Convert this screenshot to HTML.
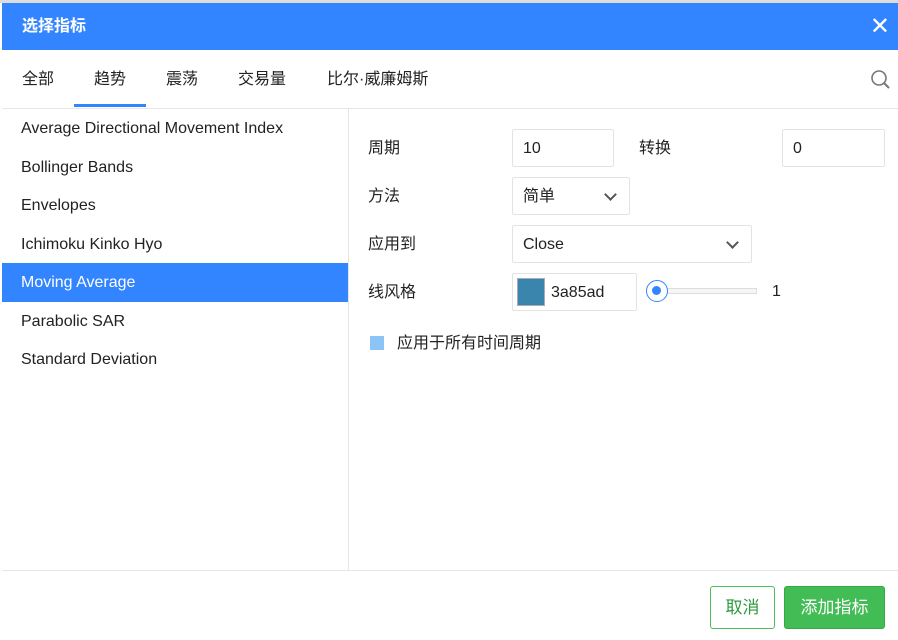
<!DOCTYPE html>
<html><head><meta charset="utf-8"><style>
*{margin:0;padding:0;box-sizing:border-box}
body{width:898px;height:640px;overflow:hidden;background:#fff;font-family:"Liberation Sans","Noto Sans CJK SC",sans-serif;color:#222;position:relative}
.top{position:absolute;left:0;top:0;width:898px;height:3px;background:#ddd}
.hdr{position:absolute;left:2px;top:3px;width:896px;height:47px;background:#3384ff;color:#fff;font-size:16px;line-height:47px;padding-left:20px;font-weight:bold}
.x{position:absolute;right:8px;top:0;font-size:24px;font-weight:normal}
.tabs{position:absolute;left:2px;top:50px;width:896px;height:59px;border-bottom:1px solid #e6e6e6}
.tab{position:absolute;top:20px;font-size:16px;line-height:20px}
.ul{position:absolute;left:72px;top:54px;width:72px;height:3px;background:#3384ff}
.left{position:absolute;left:2px;top:109px;width:347px;height:461px;border-right:1px solid #e6e6e6}
.it{height:38.5px;line-height:40px;padding-left:19px;font-size:16px}
.sel{background:#3384ff;color:#fff}
.lbl{position:absolute;font-size:16px;line-height:20px}
.box{position:absolute;border:1px solid #e3e3e3;border-radius:2px;font-size:16px;line-height:20px;padding:9px 0 0 10px}
.chev{position:absolute;right:14px;top:12px;width:9px;height:9px;border-right:2px solid #555;border-bottom:2px solid #555;transform:rotate(45deg)}
.foot{position:absolute;left:2px;top:570px;width:896px;border-top:1px solid #e6e6e6}
.btn{position:absolute;top:586px;height:43px;border-radius:3px;font-size:17px;line-height:41px;text-align:center}
</style></head><body>
<div class="top"></div>
<div class="hdr">选择指标<span class="x">✕</span></div>
<div class="tabs">
<span class="tab" style="left:20px">全部</span>
<span class="tab" style="left:92px">趋势</span>
<span class="tab" style="left:164px">震荡</span>
<span class="tab" style="left:236px">交易量</span>
<span class="tab" style="left:325px">比尔·威廉姆斯</span>
<div class="ul"></div>
<svg style="position:absolute;left:868px;top:19px" width="22" height="22" viewBox="0 0 22 22"><circle cx="9" cy="9" r="7" fill="none" stroke="#777" stroke-width="1.6"/><path d="M14 14 L19 19" stroke="#777" stroke-width="2"/></svg>
</div>
<div class="left">
<div class="it">Average Directional Movement Index</div>
<div class="it">Bollinger Bands</div>
<div class="it">Envelopes</div>
<div class="it">Ichimoku Kinko Hyo</div>
<div class="it sel">Moving Average</div>
<div class="it">Parabolic SAR</div>
<div class="it">Standard Deviation</div>
</div>
<span class="lbl" style="left:368px;top:139px">周期</span>
<div class="box" style="left:512px;top:129px;width:102px;height:38px">10</div>
<span class="lbl" style="left:639px;top:139px">转换</span>
<div class="box" style="left:782px;top:129px;width:103px;height:38px">0</div>
<span class="lbl" style="left:368px;top:187px">方法</span>
<div class="box" style="left:512px;top:177px;width:118px;height:38px">简单<span class="chev"></span></div>
<span class="lbl" style="left:368px;top:235px">应用到</span>
<div class="box" style="left:512px;top:225px;width:240px;height:38px">Close<span class="chev"></span></div>
<span class="lbl" style="left:368px;top:283px">线风格</span>
<div class="box" style="left:512px;top:273px;width:125px;height:38px;padding-left:38px">3a85ad<span style="position:absolute;left:4px;top:4px;width:28px;height:28px;background:#3a85ad;border:1px solid #aab"></span></div>
<div style="position:absolute;left:660px;top:288px;width:97px;height:6px;border:1px solid #ddd;background:#f5f5f5"></div>
<div style="position:absolute;left:646px;top:280px;width:22px;height:22px;border-radius:50%;border:1.5px solid #3384ff;background:#fff"><div style="position:absolute;left:5px;top:5px;width:9px;height:9px;border-radius:50%;background:#3384ff"></div></div>
<span class="lbl" style="left:772px;top:282px">1</span>
<div style="position:absolute;left:370px;top:336px;width:14px;height:14px;background:#8cc4f5"></div>
<span class="lbl" style="left:397px;top:334px">应用于所有时间周期</span>
<div class="foot"></div>
<div class="btn" style="left:710px;width:65px;border:1px solid #4cbf5a;color:#2e9a3c">取消</div>
<div class="btn" style="left:784px;width:101px;background:#42bc55;border:1px solid #35a848;color:#fff">添加指标</div>
</body></html>
